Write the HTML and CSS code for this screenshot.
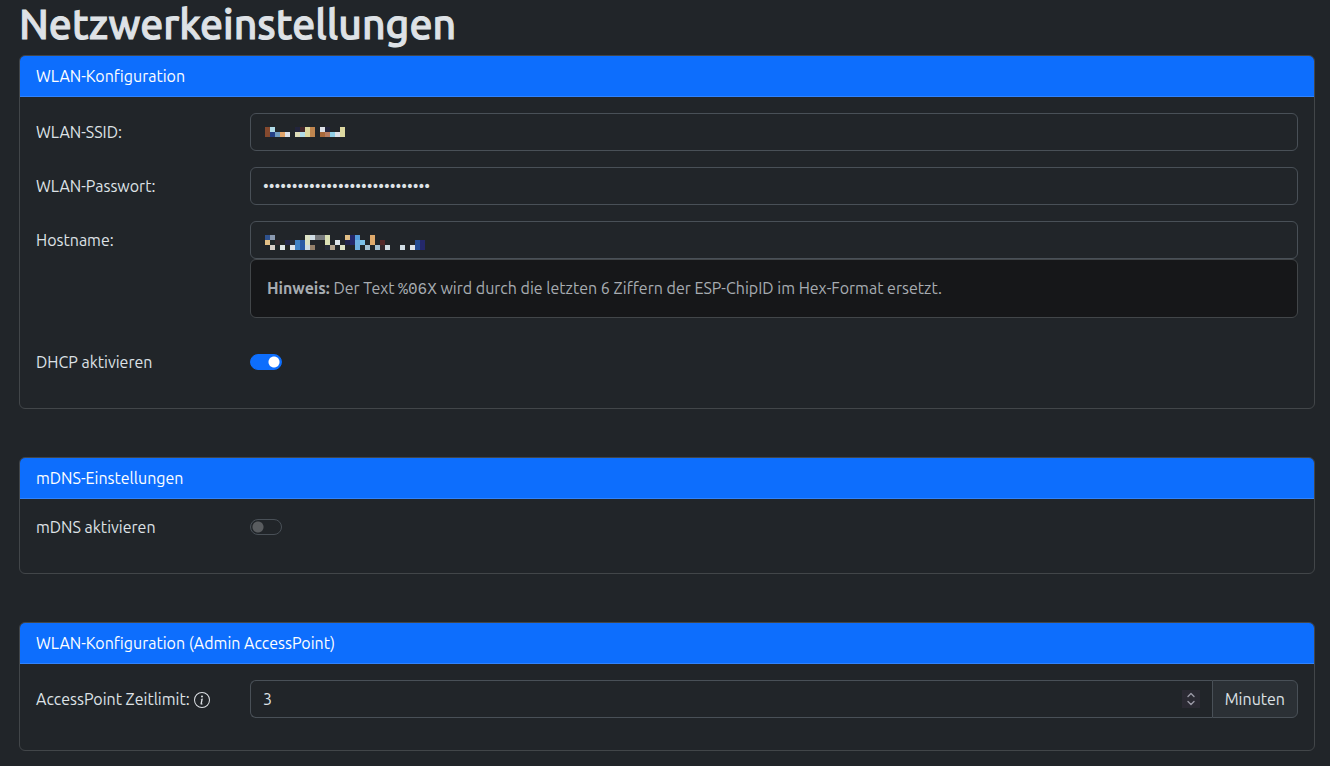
FILE: index.html
```
<!DOCTYPE html>
<html lang="de">
<head>
  <meta charset="UTF-8" />
  <meta name="viewport" content="width=device-width, initial-scale=1.0" />
  <title>Netzwerkeinstellungen</title>
  <link rel="stylesheet" href="styles.css">
</head>
<body>
  <main class="container">
    <h1>Netzwerkeinstellungen</h1>
    <form>
      <section class="card">
        <h2 class="card-header">WLAN-Konfiguration</h2>
        <div class="card-body">
          <div class="row">
            <label for="ssid">WLAN-SSID:</label>
            <div class="field">
              <input type="text" id="ssid" class="form-control" />
              <svg class="mosaic" width="80" height="10" viewBox="0 0 16 2" shape-rendering="crispEdges" aria-hidden="true">
                <path fill="#84492e" d="M0 0h1v2H0z"/>
                <path fill="#b0dce8" d="M1 0h1v1H1zM7 1h1v1H7z"/>
                <path fill="#233f85" d="M1 1h1v1H1z"/>
                <path fill="#6f9cc0" d="M2 1h1v1H2z"/>
                <path fill="#dfa369" d="M3 1h1v1H3z"/>
                <path fill="#dde1e8" d="M4 1h1v1H4zM11 0h1v1h-1zM14 1h1v1h-1z"/>
                <path fill="#22243c" d="M6 0h1v1H6zM12 0h1v1h-1z"/>
                <path fill="#43262a" d="M7 0h1v1H7z"/>
                <path fill="#dddcb8" d="M6 1h1v1H6z"/>
                <path fill="#ddd8a0" d="M8 0h1v2H8zM15 0h1v2h-1z"/>
                <path fill="#c0864f" d="M9 0h1v2H9z"/>
                <path fill="#a8693a" d="M11 1h1v1h-1z"/>
                <path fill="#b57b60" d="M12 1h1v1h-1z"/>
                <path fill="#90cfe6" d="M13 1h1v1h-1z"/>
              </svg>
            </div>
          </div>
          <div class="row">
            <label for="password">WLAN-Passwort:</label>
            <div class="field">
              <input type="password" id="password" class="form-control" value="abcdefghijklmnopqrstuvwxyz012" />
            </div>
          </div>
          <div class="row">
            <label for="hostname">Hostname:</label>
            <div class="field">
              <input type="text" id="hostname" class="form-control" />
              <svg class="mosaic" width="160" height="15" viewBox="0 0 32 3" shape-rendering="crispEdges" aria-hidden="true">
                <path fill="#2f528e" d="M0 0h1v1H0z"/>
                <path fill="#e2bf86" d="M0 1h1v1H0zM16 0h1v1h-1z"/>
                <path fill="#8a9ab0" d="M1 0h1v1H1z"/>
                <path fill="#d6ccc6" d="M1 2h1v1H1z"/>
                <path fill="#33282d" d="M2 1h1v1H2zM23 2h1v1h-1z"/>
                <path fill="#dde4ea" d="M3 2h1v1H3zM5 2h1v1H5zM14 1h1v1h-1zM29 2h1v1h-1z"/>
                <path fill="#22264c" d="M4 1h1v1H4zM16 1h1v1h-1z"/>
                <path fill="#262d3a" d="M5 1h1v1H5zM12 2h1v1h-1z"/>
                <path fill="#3f82c6" d="M6 1h1v2H6z"/>
                <path fill="#2b5ba5" d="M7 1h1v2H7z"/>
                <path fill="#dde2c4" d="M8 0h1v2H8zM15 2h1v1h-1z"/>
                <path fill="#d0dde5" d="M8 2h1v1H8zM9 0h1v1H9zM24 2h1v1h-1zM27 2h1v1h-1z"/>
                <path fill="#94806a" d="M9 2h1v1H9z"/>
                <path fill="#777a7d" d="M10 0h2v1h-2z"/>
                <path fill="#d9dfb4" d="M12 0h1v2h-1z"/>
                <path fill="#b5a590" d="M13 2h1v1h-1z"/>
                <path fill="#24286a" d="M17 0h1v2h-1zM31 1h1v2h-1z"/>
                <path fill="#559ddd" d="M18 0h1v1h-1z"/>
                <path fill="#6fb1e4" d="M18 1h1v2h-1z"/>
                <path fill="#7cc0e8" d="M19 1h1v1h-1z"/>
                <path fill="#a3c0d2" d="M20 2h1v1h-1zM22 2h1v1h-1z"/>
                <path fill="#dfaa6c" d="M21 0h1v2h-1z"/>
                <path fill="#552a2b" d="M23 1h1v1h-1z"/>
                <path fill="#244c94" d="M30 1h1v2h-1z"/>
              </svg>
              <div class="hint"><strong>Hinweis:</strong> Der Text <code>%06X</code> wird durch die letzten 6 Ziffern der ESP-ChipID im Hex-Format ersetzt.</div>
            </div>
          </div>
          <div class="row row-switch">
            <label for="dhcp">DHCP aktivieren</label>
            <input type="checkbox" id="dhcp" class="switch" checked />
          </div>
        </div>
      </section>

      <section class="card">
        <h2 class="card-header">mDNS-Einstellungen</h2>
        <div class="card-body">
          <div class="row row-switch">
            <label for="mdns">mDNS aktivieren</label>
            <input type="checkbox" id="mdns" class="switch" />
          </div>
        </div>
      </section>

      <section class="card">
        <h2 class="card-header">WLAN-Konfiguration (Admin AccessPoint)</h2>
        <div class="card-body">
          <div class="row">
            <label for="timeout">AccessPoint Zeitlimit:
              <svg class="info" width="16" height="16" viewBox="0 0 16 16" fill="currentColor" aria-hidden="true">
                <path d="M8 15A7 7 0 1 1 8 1a7 7 0 0 1 0 14zm0 1A8 8 0 1 0 8 0a8 8 0 0 0 0 16z"/>
                <path d="m8.93 6.588-2.29.287-.082.38.45.083c.294.07.352.176.288.469l-.738 3.468c-.194.897.105 1.319.808 1.319.545 0 1.178-.252 1.465-.598l.088-.416c-.2.176-.492.246-.686.246-.275 0-.375-.193-.304-.533L8.93 6.588zM9 4.5a1 1 0 1 1-2 0 1 1 0 0 1 2 0z"/>
              </svg>
            </label>
            <div class="input-group">
              <div class="field">
                <input type="number" id="timeout" class="form-control" value="3" min="0" />
                <svg class="spinner" width="18" height="18" viewBox="0 0 18 18" aria-hidden="true">
                  <path fill="#2b2a33" d="M0 0h18v18H0z"/>
                  <path fill="none" stroke="#9a99a5" stroke-width="1.4" stroke-linecap="round" stroke-linejoin="round" d="M6 6.5l3-3 3 3M6 11.5l3 3 3-3"/>
                </svg>
              </div>
              <span class="input-group-text">Minuten</span>
            </div>
          </div>
        </div>
      </section>
    </form>
  </main>
</body>
</html>
```
FILE: styles.css
```
* {
  box-sizing: border-box;
}

body {
  margin: 0;
  background: #212529;
  color: #dee2e6;
  font-family: Ubuntu, "Open Sans", sans-serif;
  font-size: 16px;
  line-height: 24px;
}

.container {
  padding: 0 15px 0 19px;
}

h1 {
  margin: 0 0 7px;
  font-size: 41px;
  line-height: 48px;
  font-weight: 500;
  -webkit-text-stroke: 1px #dee2e6;
}

.card {
  border: 1px solid #424649;
  border-radius: 6px;
  margin-bottom: 48px;
}

.card:last-child {
  margin-bottom: 15px;
}

.card-header {
  margin: 0;
  padding: 8px 16px;
  background: #0d6efd;
  border-bottom: 1px solid #3183fd;
  border-radius: 5px 5px 0 0;
  color: #fff;
  font-size: 16px;
  font-weight: 400;
}

.card-body {
  padding: 16px;
}

.row {
  display: grid;
  grid-template-columns: 214px 1fr;
  margin-bottom: 16px;
}

.row label {
  padding-top: 7px;
}

.row-switch {
  min-height: 26px;
}

.row-switch label {
  padding-top: 0;
}

.field {
  position: relative;
}

.form-control {
  display: block;
  width: 100%;
  height: 38px;
  background: #212529;
  border: 1px solid #495057;
  border-radius: 6px;
  color: inherit;
  font: inherit;
  padding: 6px 12px;
}

/* unkenntlich gemachte Werte */
.mosaic {
  position: absolute;
  left: 15px;
  top: 14px;
  pointer-events: none;
}

.hint {
  padding: 16px;
  margin-bottom: 16px;
  background: #161719;
  border: 1px solid #424649;
  border-radius: 6px;
  color: #a7acb1;
}

.hint code {
  font-family: "Liberation Mono", monospace;
  font-size: 16px;
  line-height: 22px;
}

.switch {
  appearance: none;
  width: 32px;
  height: 16px;
  margin: 4px 0;
  border: 1px solid #495057;
  border-radius: 8px;
  background: radial-gradient(circle at 7px 7px, #595c5f 5px, transparent 6px);
}

.switch:checked {
  border-color: #0d6efd;
  background: radial-gradient(circle at 23px 7px, #fff 5px, #0d6efd 6px);
}

.info {
  margin-left: 1px;
  vertical-align: -3px;
}

.input-group {
  display: flex;
}

.input-group .field {
  flex: 1;
}

.input-group .form-control {
  border-radius: 6px 0 0 6px;
  border-right: 0;
}

.input-group-text {
  padding: 6px 12px;
  background: #2b3035;
  border: 1px solid #495057;
  border-radius: 0 6px 6px 0;
}

input[type="number"] {
  appearance: textfield;
}

.spinner {
  position: absolute;
  right: 12px;
  top: 10px;
  pointer-events: none;
}
```
